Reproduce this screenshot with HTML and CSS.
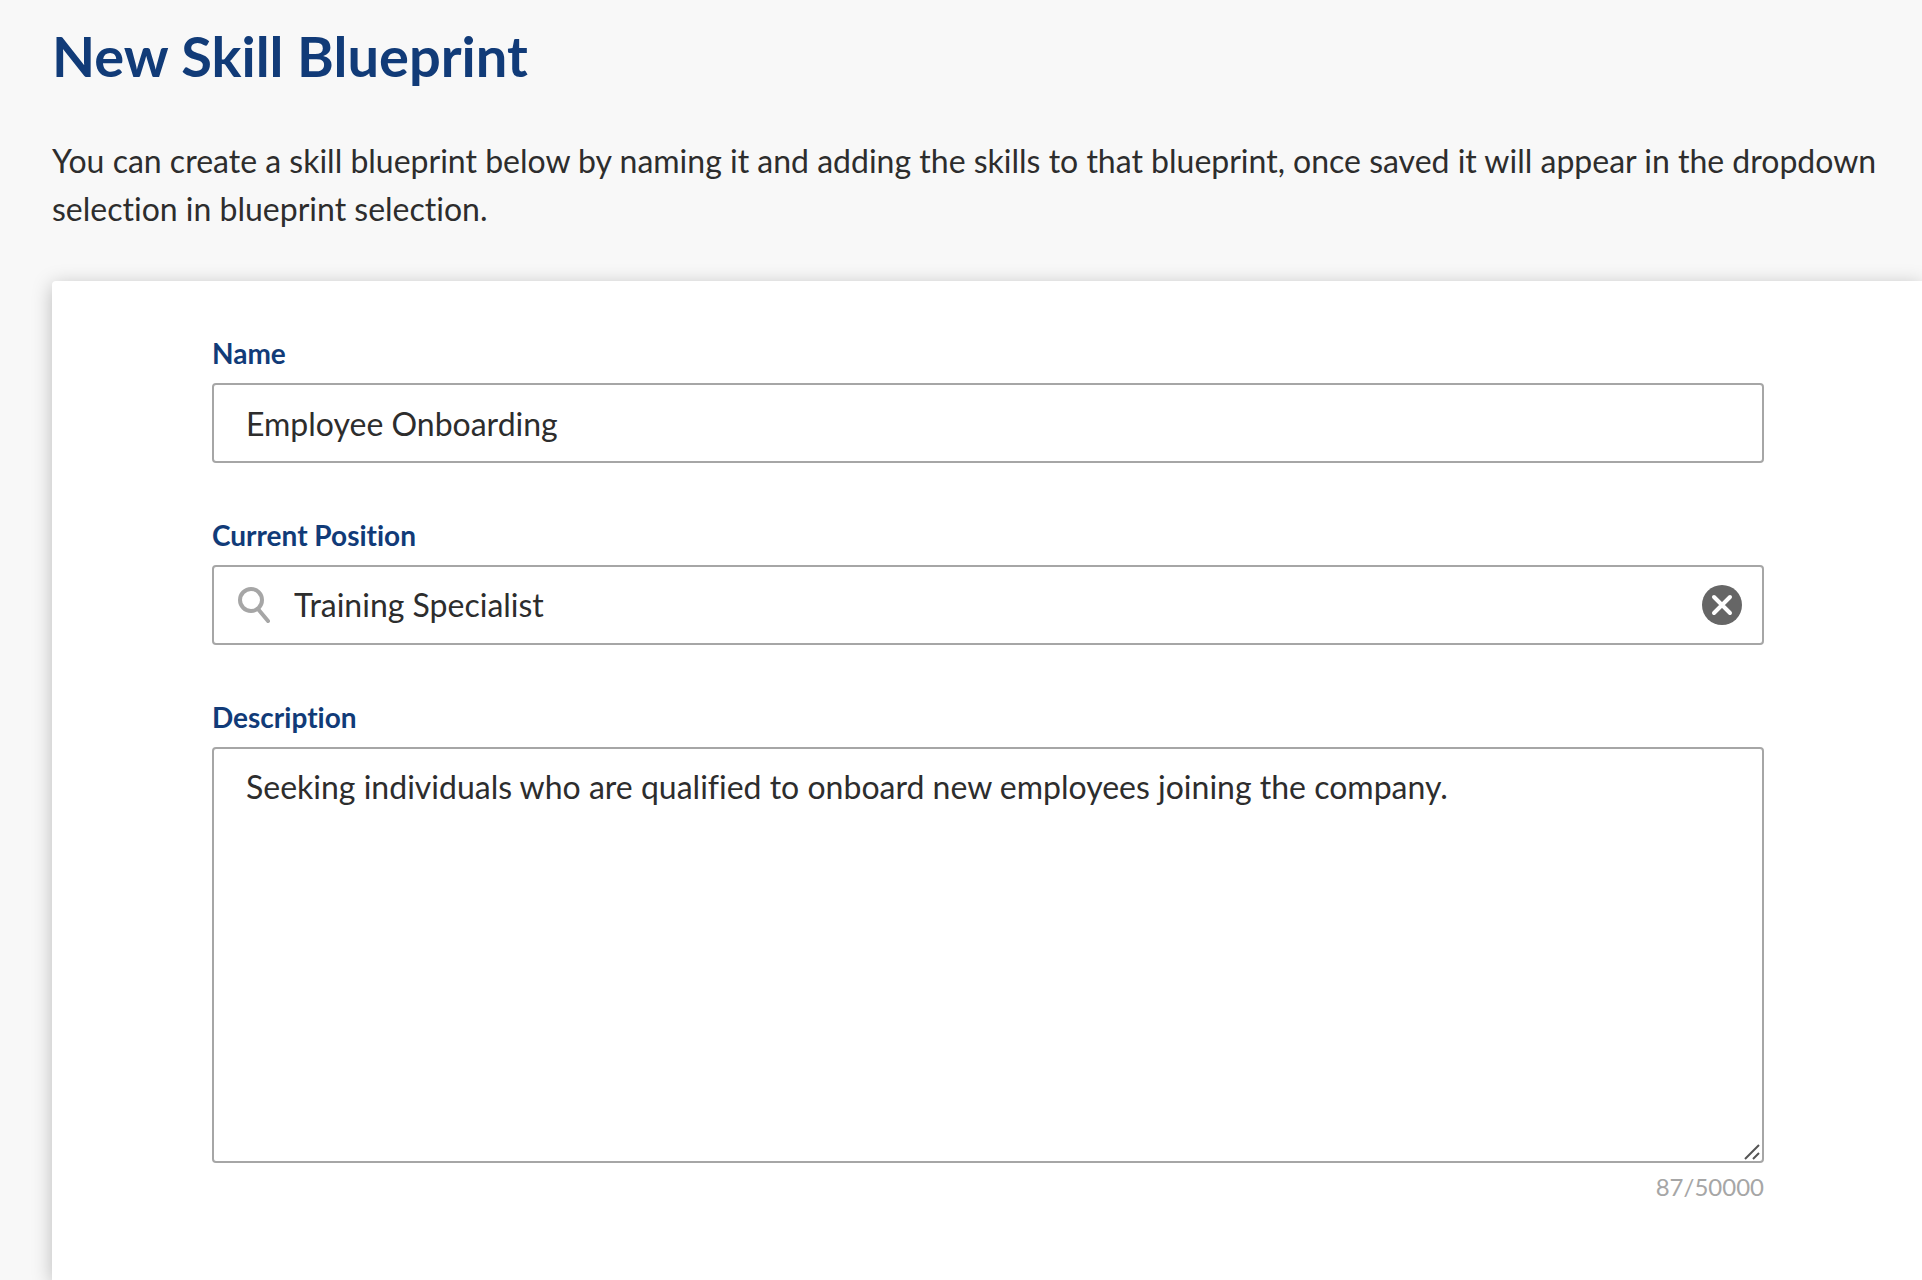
FILE: index.html
```html
<!DOCTYPE html>
<html lang="en">
<head>
    <meta charset="UTF-8">
    <meta name="viewport" content="width=device-width, initial-scale=1.0">
    <title>New Skill Blueprint</title>
    <link rel="stylesheet" href="styles.css">
</head>
<body>
    <header class="page-header">
        <h1>New Skill Blueprint</h1>
        <p>You can create a skill blueprint below by naming it and adding the skills to that blueprint, once saved it will appear in the dropdown selection in blueprint selection.</p>
    </header>

    <main class="card">
        <form class="blueprint-form">
            <div class="field">
                <label for="name">Name</label>
                <input type="text" id="name" class="control" value="Employee Onboarding">
            </div>

            <div class="field">
                <label for="position">Current Position</label>
                <div class="control search">
                    <svg class="search-icon" viewBox="0 0 36 40" aria-hidden="true">
                        <circle cx="17" cy="15" r="11" />
                        <path d="M24 24l10 12" />
                    </svg>
                    <input type="text" id="position" value="Training Specialist">
                    <button type="button" class="clear" aria-label="Clear position">
                        <svg viewBox="0 0 40 40" aria-hidden="true">
                            <circle cx="20" cy="20" r="20" />
                            <path d="M12 12l16 16M28 12L12 28" />
                        </svg>
                    </button>
                </div>
            </div>

            <div class="field">
                <label for="description">Description</label>
                <div class="textarea-wrap">
                    <textarea id="description" class="control" maxlength="50000">Seeking individuals who are qualified to onboard new employees joining the company.</textarea>
                    <svg class="grip" viewBox="0 0 18 18" aria-hidden="true">
                        <path d="M1 16L15 2M9 16l6-6" />
                    </svg>
                </div>
                <div class="counter">87/50000</div>
            </div>
        </form>
    </main>
</body>
</html>
```

FILE: styles.css
```css
* {
    box-sizing: border-box;
}

body {
    display: flex;
    flex-direction: column;
    min-height: 100vh;
    margin: 0;
    padding-left: 52px;
    overflow: hidden;
    background-color: #f8f8f8;
    color: #2d2d2d;
    font-family: Lato, sans-serif;
    font-size: 32px;
    font-variant-ligatures: none;
    line-height: 48px;
}

.page-header {
    padding: 24px 32px 48px 0;
}

h1 {
    margin: 0 0 49px;
    color: #113b78;
    font-size: 56px;
    font-weight: 700;
    line-height: 64px;
}

.page-header p {
    margin: 0;
}

.card {
    flex: 1;
    padding: 54px 158px 64px 160px;
    border-top-left-radius: 4px;
    background-color: #fff;
    box-shadow: 0 4px 20px rgba(0, 0, 0, 0.25);
}

.blueprint-form {
    display: flex;
    flex-direction: column;
    gap: 54px;
}

.field {
    display: flex;
    flex-direction: column;
}

label {
    margin-bottom: 12px;
    color: #113b78;
    font-size: 28px;
    font-weight: 700;
    line-height: 36px;
}

input,
textarea {
    color: inherit;
    font: inherit;
    font-variant-ligatures: none;
}

.control {
    width: 100%;
    height: 80px;
    padding: 0 32px;
    border: 2px solid #a6a6a6;
    border-radius: 4px;
    background-color: #fff;
}

.search {
    display: flex;
    align-items: center;
    padding: 0 20px;
}

.search input {
    flex: 1;
    min-width: 0;
    padding: 0;
    border: 0;
    background: none;
}

.search-icon {
    width: 36px;
    height: 40px;
    margin-right: 24px;
    fill: none;
    stroke: #a6a6a6;
    stroke-linecap: round;
    stroke-width: 4;
}

.clear {
    width: 40px;
    height: 40px;
    padding: 0;
    border: 0;
    border-radius: 50%;
    background: none;
    cursor: pointer;
}

.clear svg {
    display: block;
    fill: #666;
    stroke-linecap: round;
}

.clear path {
    stroke: #fff;
    stroke-width: 4;
}

.textarea-wrap {
    position: relative;
    display: flex;
}

textarea.control {
    height: 416px;
    padding: 14px 32px;
    resize: none;
}

.grip {
    position: absolute;
    right: 2px;
    bottom: 2px;
    width: 18px;
    height: 18px;
    fill: none;
    stroke: #555;
    stroke-width: 2;
    pointer-events: none;
}

.counter {
    margin-top: 6px;
    color: #a6a6a6;
    font-size: 24px;
    line-height: 36px;
    text-align: right;
}
```
